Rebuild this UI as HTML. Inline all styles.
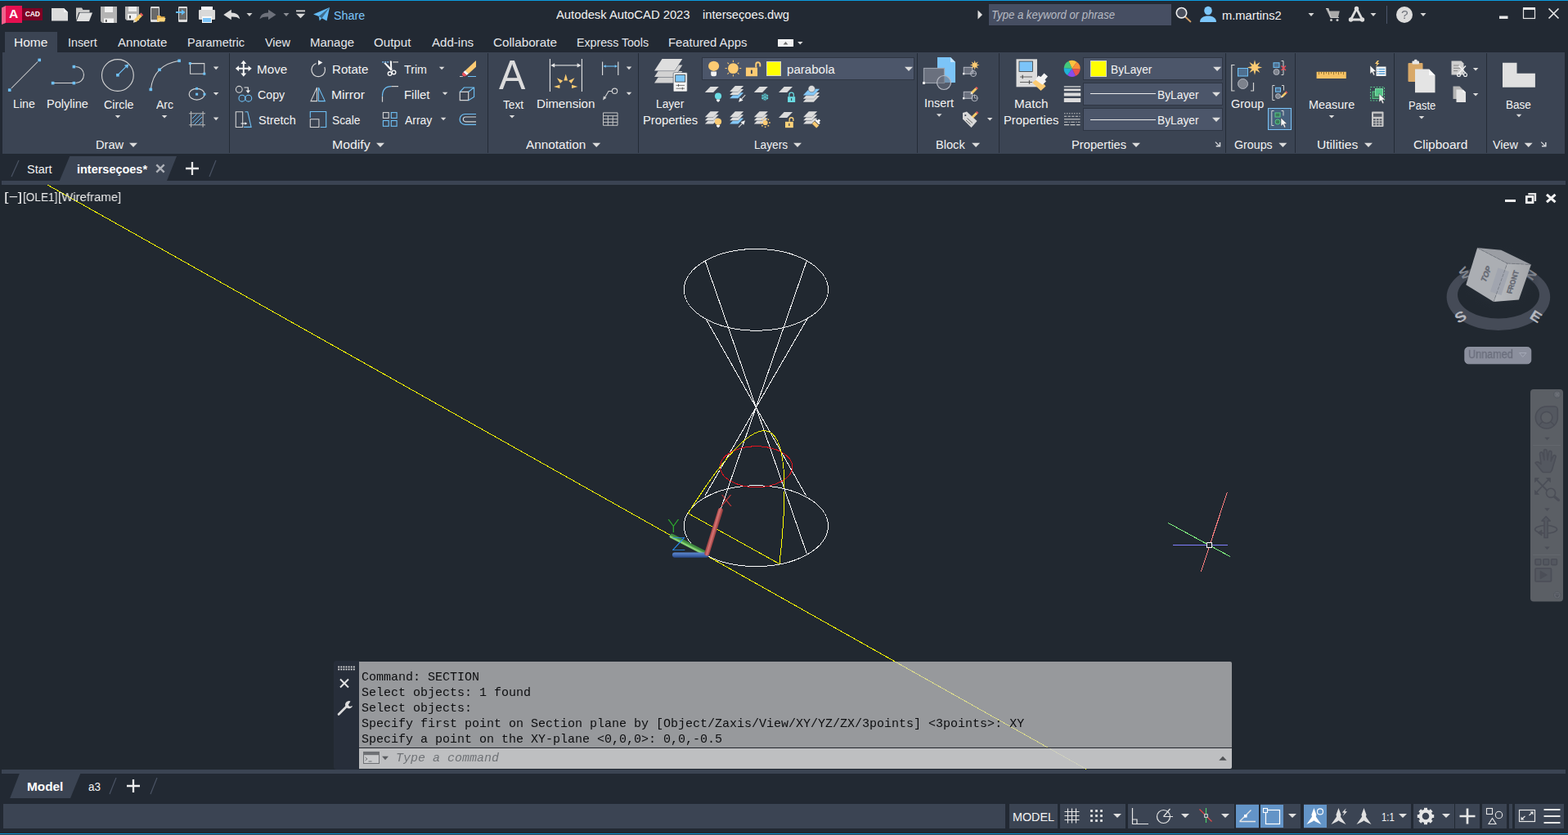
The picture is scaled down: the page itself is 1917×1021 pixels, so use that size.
<!DOCTYPE html>
<html lang="en"><head><meta charset="utf-8"><title>Autodesk AutoCAD 2023 - interseçoes.dwg</title>
<style>
html,body{margin:0;padding:0;background:#222933;overflow:hidden}
#app{position:relative;width:1917px;height:1021px;background:#222933;overflow:hidden;
 font-family:"Liberation Sans",sans-serif;font-size:15.5px;color:#f0f0f0}
.t{position:absolute;white-space:pre;transform-origin:0 50%;}
svg{overflow:visible;display:block}
</style></head>
<body><div id="app">
<div id="titlebar"><div style="position:absolute;left:0px;top:0px;width:1917px;height:1px;background:#0b9ce0;"></div><div class="search" style="position:absolute;left:1209px;top:5px;width:223px;height:26px;background:#464e62;"></div><span class="t" style="left:408.17px;top:7.63px;font-size:15.5px;line-height:22px;transform:scaleX(0.9223);color:#7cc6fa;">Share</span><span class="t" style="left:679.8px;top:6.63px;font-size:15.5px;line-height:22px;transform:scaleX(0.9538);color:#f2f2f2;">Autodesk AutoCAD 2023</span><span class="t" style="left:859.38px;top:6.63px;font-size:15.5px;line-height:22px;transform:scaleX(0.9459);color:#f2f2f2;">interseçoes.dwg</span><span class="t" style="left:1212.15px;top:7.98px;font-size:14.5px;line-height:20px;transform:scaleX(0.9068);color:#b6bac2;font-style:italic;">Type a keyword or phrase</span><span class="t" style="left:1494.48px;top:7.63px;font-size:15.5px;line-height:22px;transform:scaleX(0.9495);color:#f2f2f2;">m.martins2</span><div style="position:absolute;left:1695px;top:7px;width:1px;height:22px;background:#4b556a;"></div><svg style="position:absolute;left:0px;top:0px;" width="1917" height="36" viewBox="0 0 1917 36"><path d="M2 9.5L7 7V28L2 30z" fill="#f0628c"/><rect x="7" y="7" width="20" height="21" fill="#e51050"/><rect x="27" y="10" width="25" height="15" fill="#7d0024"/><path d="M63 10h15l5 5v10.5H63z" fill="#dcdcdc"/><path d="M78 10v5h5z" fill="#f4f4f4"/><path d="M93 9.5h7l1.5 2.5h8v3h-13l-3.5 10z" fill="#c9c9c9"/><path d="M97.5 15.5H113l-4 10.5H93.5z" fill="#e0e0e0"/><path d="M123 8h20v20h-18l-2-2z" fill="#b4b4b4"/><rect x="128" y="8" width="10" height="7" fill="#f0f0f0"/><rect x="127" y="22.5" width="12" height="5.5" fill="#f4f4f4"/><rect x="129" y="24" width="1.6" height="3" fill="#444"/><path d="M153 8h17v17h-15l-2-2z" fill="#b4b4b4"/><rect x="157" y="8" width="10" height="6" fill="#ececec"/><rect x="156" y="17" width="11" height="7" fill="#f0f0f0"/><rect x="158" y="19" width="2" height="3.5" fill="#555"/><path d="M163 27.5l1-3.5 7-7 2.8 2.8-7 7z" fill="#f3c969"/><path d="M171 17l1.4-1.4 2.8 2.8-1.4 1.4z" fill="#f05a5a"/><path d="M163 27.5l1-3.5 2.6 2.6z" fill="#d8d8d8"/><rect x="184" y="8" width="11" height="19" rx="1.2" fill="#dcdcdc"/><rect x="185" y="10" width="9" height="14" fill="#6a6a6a"/><path d="M192 19h4l1 1.2h4.5V26H192z" fill="#e8b34d"/><path d="M193.5 22h9l-1.5 4.5H192z" fill="#fbd57c"/><rect x="218" y="8" width="11" height="19" rx="1.2" fill="#dcdcdc"/><rect x="219" y="10" width="9" height="14" fill="#6a6a6a"/><path d="M215 14h7v-2.5l4.5 3.5-4.5 3.5V16h-7z" fill="#64bdf7"/><rect x="246" y="8" width="14" height="6" fill="#fafafa"/><rect x="243" y="12" width="20" height="12" rx="1" fill="#d9d9d9"/><rect x="247" y="20" width="12" height="8" fill="#fafafa"/><rect x="248" y="22" width="10" height="5" fill="#7cc4f8"/><path d="M273.3 18l9.5-6.3v3.7c6 .2 9.6 2.6 10.4 7.9-2.7-2.5-6-3-10.4-2.8v3.8z" fill="#dcdcdc"/><path d="M301.5 16h7l-3.5 4z" fill="#d0d0d0"/><path d="M337.5 18l-9.5-6.3v3.7c-6 .2-9.6 2.6-10.4 7.9 2.7-2.5 6-3 10.4-2.8v3.8z" fill="#6d717b"/><path d="M346.5 16h7l-3.5 4z" fill="#8d9097"/><rect x="362" y="12.5" width="11" height="1.8" fill="#d8d8d8"/><path d="M362 16.75h11l-5.5 5.5z" fill="#d8d8d8"/><path d="M383 17.5L403 9l-3.5 16.5-6-3.2-2.8 3.2-1-5.5z" fill="#63bbf5"/><path d="M389.7 20L403 9l-9.5 13.3" fill="#222933" opacity=".55"/><path d="M1195.5 12.5v11l5.5-5.5z" fill="#e0e0e0"/><path d="M1449 20.5l6.5 6" stroke="#d3a06a" stroke-width="1.8" stroke-linecap="round"/><circle cx="1444.5" cy="15.7" r="6.2" fill="#4a4f5c" stroke="#f0f0f0" stroke-width="1.6"/><ellipse cx="1477" cy="13" rx="4.8" ry="5.3" fill="#7cc6fa"/><path d="M1467 27c0-5 4-7.5 10-7.5s10 2.5 10 7.5z" fill="#7cc6fa"/><path d="M1599.5 16h7l-3.5 4z" fill="#d8d8d8"/><path d="M1621 10.5h2.8l1 3h13l-1.8 7.5h-10z" fill="#a9a9a9"/><path d="M1621 10.5h2.8l3.2 11h10" stroke="#c9c9c9" stroke-width="1.2" fill="none"/><circle cx="1627.5" cy="24.5" r="1.5" fill="#c9c9c9"/><circle cx="1635" cy="24.5" r="1.5" fill="#c9c9c9"/><path d="M1658.5 10.5L1651.5 24h14z" fill="none" stroke="#dcdcdc" stroke-width="2.8" stroke-linejoin="round"/><circle cx="1658.5" cy="10.5" r="2.7" fill="#dcdcdc"/><circle cx="1651.5" cy="24" r="2.7" fill="#dcdcdc"/><circle cx="1665.5" cy="24" r="2.7" fill="#dcdcdc"/><path d="M1675.5 16h7l-3.5 4z" fill="#d8d8d8"/><circle cx="1717" cy="18" r="10" fill="#dcdcdc"/><path d="M1736.5 16h7l-3.5 4z" fill="#d8d8d8"/><rect x="1833" y="19.5" width="10.5" height="3.5" fill="#e6e6e6"/><rect x="1862.5" y="10.5" width="14" height="12" fill="none" stroke="#e6e6e6" stroke-width="1.2"/><rect x="1862" y="9" width="15" height="3" fill="#e6e6e6"/><path d="M1893.5 10.5l12 12M1905.5 10.5l-12 12" stroke="#e6e6e6" stroke-width="1.7"/></svg><span class="t" style="left:30.68px;top:11.32px;font-size:8.6px;line-height:12px;letter-spacing:-0.176px;color:#fff;font-weight:bold;">CAD</span><span class="t" style="left:11.41px;top:6.75px;font-size:14px;line-height:20px;transform:scaleX(1.1108);color:#fff;font-weight:bold;">A</span><span class="t" style="left:1712.92px;top:7.13px;font-size:15.5px;line-height:22px;color:#70747c;will-change:transform;">?</span></div>
<div id="ribbon"><div class="tab-active" style="position:absolute;left:6px;top:39px;width:64px;height:26px;background:#3b4453;"></div><span class="t" style="left:17.04px;top:40.63px;font-size:15.5px;line-height:22px;color:#f2f2f2;">Home</span><span class="t" style="left:83.05px;top:40.63px;font-size:15.5px;line-height:22px;transform:scaleX(0.9199);color:#e4e6ea;">Insert</span><span class="t" style="left:144px;top:40.63px;font-size:15.5px;line-height:22px;transform:scaleX(0.972);color:#e4e6ea;">Annotate</span><span class="t" style="left:229.22px;top:40.63px;font-size:15.5px;line-height:22px;transform:scaleX(0.9341);color:#e4e6ea;">Parametric</span><span class="t" style="left:323.71px;top:40.63px;font-size:15.5px;line-height:22px;transform:scaleX(0.9299);color:#e4e6ea;">View</span><span class="t" style="left:378.88px;top:40.63px;font-size:15.5px;line-height:22px;transform:scaleX(0.9657);color:#e4e6ea;">Manage</span><span class="t" style="left:457.14px;top:40.63px;font-size:15.5px;line-height:22px;transform:scaleX(0.9755);color:#e4e6ea;">Output</span><span class="t" style="left:528.3px;top:40.63px;font-size:15.5px;line-height:22px;transform:scaleX(0.9728);color:#e4e6ea;">Add-ins</span><span class="t" style="left:603.34px;top:40.63px;font-size:15.5px;line-height:22px;transform:scaleX(0.9821);color:#e4e6ea;">Collaborate</span><span class="t" style="left:705.15px;top:40.63px;font-size:15.5px;line-height:22px;transform:scaleX(0.9147);color:#e4e6ea;">Express Tools</span><span class="t" style="left:817px;top:40.63px;font-size:15.5px;line-height:22px;transform:scaleX(0.9556);color:#e4e6ea;">Featured Apps</span><div style="position:absolute;left:951px;top:48px;width:19px;height:9px;background:#f2f2f2;box-shadow:inset 0 0 0 1px #fff;"></div><div class="ribbon" style="position:absolute;left:3px;top:64px;width:1910px;height:124px;background:#3b4453;"></div><div style="position:absolute;left:280px;top:65px;width:1px;height:122px;background:#242b36;"></div><div style="position:absolute;left:596px;top:65px;width:1px;height:122px;background:#242b36;"></div><div style="position:absolute;left:780px;top:65px;width:1px;height:122px;background:#242b36;"></div><div style="position:absolute;left:1121px;top:65px;width:1px;height:122px;background:#242b36;"></div><div style="position:absolute;left:1221px;top:65px;width:1px;height:122px;background:#242b36;"></div><div style="position:absolute;left:1498px;top:65px;width:1px;height:122px;background:#242b36;"></div><div style="position:absolute;left:1583px;top:65px;width:1px;height:122px;background:#242b36;"></div><div style="position:absolute;left:1704px;top:65px;width:1px;height:122px;background:#242b36;"></div><div style="position:absolute;left:1817px;top:65px;width:1px;height:122px;background:#242b36;"></div><div style="position:absolute;left:858px;top:70px;width:260px;height:28px;background:#4c566a;box-shadow:inset 0 0 0 1px #2e3543;"></div><div style="position:absolute;left:1324px;top:70px;width:171px;height:28px;background:#4c566a;box-shadow:inset 0 0 0 1px #2e3543;"></div><div style="position:absolute;left:1324px;top:101px;width:171px;height:28px;background:#4c566a;box-shadow:inset 0 0 0 1px #2e3543;"></div><div style="position:absolute;left:1324px;top:132px;width:171px;height:28px;background:#4c566a;box-shadow:inset 0 0 0 1px #2e3543;"></div><div style="position:absolute;left:937px;top:75px;width:18px;height:18px;background:#ffff00;box-shadow:inset 0 0 0 1px #d9d9c8;"></div><div style="position:absolute;left:1333px;top:74px;width:20px;height:20px;background:#ffff00;box-shadow:inset 0 0 0 1px #d9d9c8;"></div><div style="position:absolute;left:1333px;top:114px;width:80px;height:1px;background:#ececec;"></div><div style="position:absolute;left:1333px;top:146px;width:80px;height:1px;background:#ececec;"></div><div style="position:absolute;left:1550px;top:132px;width:29px;height:27px;background:#46607d;box-shadow:inset 0 0 0 1px #7cc4f8;"></div><span class="t" style="left:16.35px;top:115.63px;font-size:15.5px;line-height:22px;transform:scaleX(0.9155);color:#f2f2f2;">Line</span><span class="t" style="left:57.42px;top:115.63px;font-size:15.5px;line-height:22px;transform:scaleX(0.9386);color:#f2f2f2;">Polyline</span><span class="t" style="left:126.79px;top:116.63px;font-size:15.5px;line-height:22px;transform:scaleX(0.9222);color:#f2f2f2;">Circle</span><span class="t" style="left:191.1px;top:116.63px;font-size:15.5px;line-height:22px;transform:scaleX(0.9054);color:#f2f2f2;">Arc</span><span class="t" style="left:116.61px;top:165.63px;font-size:15.5px;line-height:22px;transform:scaleX(0.9436);color:#f2f2f2;">Draw</span><span class="t" style="left:314.16px;top:73.63px;font-size:15.5px;line-height:22px;transform:scaleX(0.9822);color:#f2f2f2;">Move</span><span class="t" style="left:315.29px;top:104.63px;font-size:15.5px;line-height:22px;transform:scaleX(0.9166);color:#f2f2f2;">Copy</span><span class="t" style="left:315.77px;top:135.63px;font-size:15.5px;line-height:22px;transform:scaleX(0.9332);color:#f2f2f2;">Stretch</span><span class="t" style="left:405.97px;top:73.63px;font-size:15.5px;line-height:22px;transform:scaleX(0.9727);color:#f2f2f2;">Rotate</span><span class="t" style="left:405.02px;top:104.63px;font-size:15.5px;line-height:22px;transform:scaleX(1.0143);color:#f2f2f2;">Mirror</span><span class="t" style="left:405.7px;top:135.63px;font-size:15.5px;line-height:22px;transform:scaleX(0.8878);color:#f2f2f2;">Scale</span><span class="t" style="left:494.23px;top:73.63px;font-size:15.5px;line-height:22px;transform:scaleX(0.9191);color:#f2f2f2;">Trim</span><span class="t" style="left:494.09px;top:104.63px;font-size:15.5px;line-height:22px;transform:scaleX(0.959);color:#f2f2f2;">Fillet</span><span class="t" style="left:494.5px;top:135.63px;font-size:15.5px;line-height:22px;transform:scaleX(0.8971);color:#f2f2f2;">Array</span><span class="t" style="left:405.91px;top:165.63px;font-size:15.5px;line-height:22px;transform:scaleX(1.021);color:#f2f2f2;">Modify</span><span class="t" style="left:614.74px;top:116.63px;font-size:15.5px;line-height:22px;transform:scaleX(0.8792);color:#f2f2f2;">Text</span><span class="t" style="left:656.17px;top:115.63px;font-size:15.5px;line-height:22px;transform:scaleX(0.9745);color:#f2f2f2;">Dimension</span><span class="t" style="left:643.2px;top:165.63px;font-size:15.5px;line-height:22px;transform:scaleX(0.9885);color:#f2f2f2;">Annotation</span><span class="t" style="left:802.39px;top:115.63px;font-size:15.5px;line-height:22px;transform:scaleX(0.8848);color:#f2f2f2;">Layer</span><span class="t" style="left:786.1px;top:135.63px;font-size:15.5px;line-height:22px;transform:scaleX(0.951);color:#f2f2f2;">Properties</span><span class="t" style="left:961.56px;top:73.63px;font-size:15.5px;line-height:22px;transform:scaleX(0.9733);color:#f2f2f2;">parabola</span><span class="t" style="left:922.29px;top:165.63px;font-size:15.5px;line-height:22px;transform:scaleX(0.8826);color:#f2f2f2;">Layers</span><span class="t" style="left:1129.84px;top:114.63px;font-size:15.5px;line-height:22px;transform:scaleX(0.928);color:#f2f2f2;">Insert</span><span class="t" style="left:1144.31px;top:165.63px;font-size:15.5px;line-height:22px;transform:scaleX(0.9421);color:#f2f2f2;">Block</span><span class="t" style="left:1240.16px;top:115.63px;font-size:15.5px;line-height:22px;transform:scaleX(0.9848);color:#f2f2f2;">Match</span><span class="t" style="left:1227.1px;top:135.63px;font-size:15.5px;line-height:22px;transform:scaleX(0.9524);color:#f2f2f2;">Properties</span><span class="t" style="left:1358.38px;top:73.63px;font-size:15.5px;line-height:22px;transform:scaleX(0.8861);color:#f2f2f2;">ByLayer</span><span class="t" style="left:1415.38px;top:104.63px;font-size:15.5px;line-height:22px;transform:scaleX(0.8897);color:#f2f2f2;">ByLayer</span><span class="t" style="left:1415.38px;top:135.63px;font-size:15.5px;line-height:22px;transform:scaleX(0.8897);color:#f2f2f2;">ByLayer</span><span class="t" style="left:1310.3px;top:165.63px;font-size:15.5px;line-height:22px;transform:scaleX(0.9495);color:#f2f2f2;">Properties</span><span class="t" style="left:1504.68px;top:115.63px;font-size:15.5px;line-height:22px;transform:scaleX(0.9341);color:#f2f2f2;">Group</span><span class="t" style="left:1509.39px;top:165.63px;font-size:15.5px;line-height:22px;transform:scaleX(0.9194);color:#f2f2f2;">Groups</span><span class="t" style="left:1600.13px;top:116.63px;font-size:15.5px;line-height:22px;transform:scaleX(0.9313);color:#f2f2f2;">Measure</span><span class="t" style="left:1609.83px;top:165.63px;font-size:15.5px;line-height:22px;transform:scaleX(1.0074);color:#f2f2f2;">Utilities</span><span class="t" style="left:1721.74px;top:117.63px;font-size:15.5px;line-height:22px;transform:scaleX(0.8385);color:#f2f2f2;">Paste</span><span class="t" style="left:1728.03px;top:165.63px;font-size:15.5px;line-height:22px;color:#f2f2f2;">Clipboard</span><span class="t" style="left:1841.4px;top:116.63px;font-size:15.5px;line-height:22px;transform:scaleX(0.8737);color:#f2f2f2;">Base</span><span class="t" style="left:1824.71px;top:165.63px;font-size:15.5px;line-height:22px;transform:scaleX(0.9239);color:#f2f2f2;">View</span><span class="t" style="left:610.2px;top:57.27px;font-size:50px;line-height:70px;transform:scaleX(0.969);color:#dcdcdc;">A</span><svg style="position:absolute;left:0px;top:36px;" width="1917" height="156" viewBox="0 36 1917 156"><path d="M957.6 54.5l2.9-3.6 2.9 3.6z" fill="#6a6a6a"/><path d="M975.05 51h6.5l-3.25 3.6z" fill="#dcdcdc"/><path d="M158 174.70000000000002h10l-5 5.2z" fill="#dcdcdc"/><path d="M460 174.70000000000002h10l-5 5.2z" fill="#dcdcdc"/><path d="M724.2 174.70000000000002h10l-5 5.2z" fill="#dcdcdc"/><path d="M970 174.70000000000002h10l-5 5.2z" fill="#dcdcdc"/><path d="M1188.1 174.70000000000002h10l-5 5.2z" fill="#dcdcdc"/><path d="M1384 174.70000000000002h10l-5 5.2z" fill="#dcdcdc"/><path d="M1563.4 174.70000000000002h10l-5 5.2z" fill="#dcdcdc"/><path d="M1668 174.70000000000002h10l-5 5.2z" fill="#dcdcdc"/><path d="M1863.7 174.70000000000002h10l-5 5.2z" fill="#dcdcdc"/><path d="M1485.9 173.6l5 5" stroke="#d8dade" stroke-width="1.3" fill="none"/><path d="M1486.7 178.7h4.8v-4.7" stroke="#d8dade" stroke-width="1.5" fill="none"/><path d="M1884.2 173.6l5 5" stroke="#d8dade" stroke-width="1.3" fill="none"/><path d="M1885 178.7h4.8v-4.7" stroke="#d8dade" stroke-width="1.5" fill="none"/><path d="M140.75 140.89999999999998h6.5l-3.25 3.6z" fill="#dcdcdc"/><path d="M197.85 140.89999999999998h6.5l-3.25 3.6z" fill="#dcdcdc"/><path d="M622.75 140.89999999999998h6.5l-3.25 3.6z" fill="#dcdcdc"/><path d="M1144.95 139.2h6.5l-3.25 3.6z" fill="#dcdcdc"/><path d="M1624.75 140.89999999999998h6.5l-3.25 3.6z" fill="#dcdcdc"/><path d="M1734.75 142h6.5l-3.25 3.6z" fill="#dcdcdc"/><path d="M1853.75 139.7h6.5l-3.25 3.6z" fill="#dcdcdc"/><path d="M260.85 81.60000000000001h6.5l-3.25 3.6z" fill="#dcdcdc"/><path d="M260.85 113h6.5l-3.25 3.6z" fill="#dcdcdc"/><path d="M260.85 143.6h6.5l-3.25 3.6z" fill="#dcdcdc"/><path d="M536.85 81.7h6.5l-3.25 3.6z" fill="#dcdcdc"/><path d="M540.85 112.7h6.5l-3.25 3.6z" fill="#dcdcdc"/><path d="M538.85 143.7h6.5l-3.25 3.6z" fill="#dcdcdc"/><path d="M765.75 81.60000000000001h6.5l-3.25 3.6z" fill="#dcdcdc"/><path d="M765.75 112.7h6.5l-3.25 3.6z" fill="#dcdcdc"/><path d="M1206.95 143.89999999999998h6.5l-3.25 3.6z" fill="#dcdcdc"/><path d="M1800.85 83h6.5l-3.25 3.6z" fill="#dcdcdc"/><path d="M1800.85 113.9h6.5l-3.25 3.6z" fill="#dcdcdc"/><path d="M1483.1 81.7h10l-5 5.2z" fill="#dcdcdc"/><path d="M1482 112.80000000000001h10l-5 5.2z" fill="#dcdcdc"/><path d="M1482 143.8h10l-5 5.2z" fill="#dcdcdc"/><path d="M1106 81.7h10l-5 5.2z" fill="#dcdcdc"/><path d="M13.8 108L46.1 75.5" stroke="#d4d4d4" stroke-width="1.05" fill="none" /><rect x="9.9" y="108.3" width="3.6" height="3.6" fill="#6fc1f6"/><rect x="46.4" y="71.6" width="3.6" height="3.6" fill="#6fc1f6"/><path d="M64.6 101.5H90.4M92.5 81.5A10 10 0 0 1 92.5 101.5" stroke="#d4d4d4" stroke-width="1.05" fill="none" /><rect x="62.8" y="99.8" width="3.6" height="3.6" fill="#6fc1f6"/><rect x="88.6" y="99.8" width="3.6" height="3.6" fill="#6fc1f6"/><rect x="88.6" y="79.8" width="3.6" height="3.6" fill="#6fc1f6"/><circle cx="143.9" cy="92" r="19.4" fill="none" stroke="#d4d4d4" stroke-width="1.1"/><path d="M144.5 91.2L155 80.7" stroke="#6fc1f6" stroke-width="1.2" fill="none" /><path d="M157.3 78.4l-1.3 5.4-4.1-4.1z" fill="#6fc1f6" /><rect x="142.1" y="90" width="3.6" height="3.6" fill="#6fc1f6"/><path d="M184.3 109.4C185.5 99 189 91 195 85.3C201 79.5 209 76 219.1 74.3" stroke="#d4d4d4" stroke-width="1.05" fill="none" /><rect x="182.5" y="107.6" width="3.6" height="3.6" fill="#6fc1f6"/><rect x="193.2" y="83.5" width="3.6" height="3.6" fill="#6fc1f6"/><rect x="217.3" y="72.5" width="3.6" height="3.6" fill="#6fc1f6"/><path d="M232.6 77.6H249.8V90.2H232.6z" stroke="#d4d4d4" stroke-width="1.05" fill="none" /><rect x="230.8" y="76" width="3" height="3" fill="#6fc1f6"/><rect x="248.3" y="88.7" width="3" height="3" fill="#6fc1f6"/><ellipse cx="240.6" cy="115.2" rx="9.4" ry="6.9" fill="none" stroke="#d4d4d4" stroke-width="1.2"/><rect x="239.1" y="106.8" width="3" height="3" fill="#6fc1f6"/><rect x="239.1" y="113.7" width="3" height="3" fill="#6fc1f6"/><rect x="248.5" y="113.7" width="3" height="3" fill="#6fc1f6"/><path d="M235 145l5.5-5.5M235 150.5l11-11M237.5 152.5l9.5-9.5M243 152.5l4-4" stroke="#6fc1f6" stroke-width="1" fill="none" /><path d="M231.2 138.7H251M231.2 152.8H251M233.6 136V155.6M248.1 136V155.6" stroke="#b8b8b8" stroke-width="1.1" fill="none" /><g transform="translate(297.8 83.8) scale(1.08) translate(-297.9 -84.2)"><path d="M297.9 75l3.2 3.9h-2.3v4.4h4.4v-2.3l3.9 3.2-3.9 3.2v-2.3h-4.4v4.4h2.3l-3.2 3.9-3.2-3.9h2.3v-4.4h-4.4v2.3l-3.9-3.2 3.9-3.2v2.3h4.4v-4.4h-2.3z" fill="#f4f4f4" /></g><circle cx="292.3" cy="109.3" r="3.9" fill="none" stroke="#d4d4d4" stroke-width="1.1"/><circle cx="295.9" cy="120.2" r="3.9" fill="none" stroke="#6fc1f6" stroke-width="1.1"/><circle cx="303.8" cy="120.2" r="3.9" fill="none" stroke="#6fc1f6" stroke-width="1.1"/><path d="M298.5 107h4.8v4" stroke="#e8e8e8" stroke-width="1.1" fill="none" /><path d="M300.6 110.5h5.4l-2.7 3.4z" fill="#f4f4f4" /><path d="M288.3 136.7h8.4v18.7h-8.4z" stroke="#d4d4d4" stroke-width="1.05" fill="none" /><path d="M299.5 136.7h3.3l4.3 18.7h-9" stroke="#6fc1f6" stroke-width="1.1" fill="none" /><path d="M294.5 151h6" stroke="#f0f0f0" stroke-width="1.1" fill="none" /><path d="M299.5 149.2l2.8 1.8-2.8 1.8z" fill="#f0f0f0" /><path d="M386.5 77.5A8.3 8.3 0 1 0 396.8 82" stroke="#d8d8d8" stroke-width="1.2" fill="none" /><path d="M389 73.6l5.4 2.9-5.4 3.3z" fill="#f4f4f4" /><path d="M387.6 107v16.6h-7.6z" stroke="#d4d4d4" stroke-width="1.05" fill="none" /><path d="M389.5 107v16.6h7.8z" stroke="#6fc1f6" stroke-width="1.05" fill="none" /><path d="M379.3 145.8h10.6v9.7h-10.6z" stroke="#d4d4d4" stroke-width="1.05" fill="none" /><path d="M379.3 144v-7.5h19.4v19h-7" stroke="#6fc1f6" stroke-width="1.1" fill="none" /><path d="M467.2 75.9h8.6" stroke="#6fa8d8" stroke-width="1.6" fill="none" stroke-dasharray="2 1"/><path d="M480.3 75.9h6.7" stroke="#b0b0b0" stroke-width="1.6" fill="none" /><path d="M469.3 77.3l1.9-.8 8.4 8.3-1.6 2z" fill="#f6f6f6" /><path d="M476.8 74.2l2.1.5.4 11-1.9 .8z" fill="#f6f6f6" /><circle cx="476.6" cy="90.1" r="2.3" fill="none" stroke="#f6f6f6" stroke-width="1.4"/><circle cx="481.5" cy="88.4" r="2.3" fill="none" stroke="#f6f6f6" stroke-width="1.4"/><path d="M467.5 124.7v-7" stroke="#d4d4d4" stroke-width="1.2" fill="none" /><path d="M467.5 117.7C467.5 110 471 105.6 478.5 105.6" stroke="#6fc1f6" stroke-width="1.2" fill="none" /><path d="M478.5 105.6h8.5" stroke="#d4d4d4" stroke-width="1.2" fill="none" /><rect x="468.4" y="137.6" width="6.8" height="6.8" fill="none" stroke="#d4d4d4" stroke-width="1.1"/><rect x="478.3" y="137.6" width="6.8" height="6.8" fill="none" stroke="#6fc1f6" stroke-width="1.1"/><rect x="468.4" y="147.5" width="6.8" height="6.8" fill="none" stroke="#6fc1f6" stroke-width="1.1"/><rect x="478.3" y="147.5" width="6.8" height="6.8" fill="none" stroke="#6fc1f6" stroke-width="1.1"/><path d="M568.5 86.5l13.5-12.5v7.8l-9.3 8.4z" fill="#fccb73" /><path d="M566.3 88.2l2.3-2 4.2 3.9-2.2 2z" fill="#f8f8f8" /><path d="M566.3 88.2l4.3 3.9-1.2 1-2.3 .3-1.8-1.3-.3-2.2z" fill="#f0505a" /><path d="M562 93.5h3.8" stroke="#d0d0d0" stroke-width="1" fill="none" /><path d="M572 93.5h10" stroke="#6fc1f6" stroke-width="1" fill="none" /><path d="M562.3 112.3h10.4v10.4h-10.4z" stroke="#d4d4d4" stroke-width="1.2" fill="none" /><path d="M562.3 112.3l5-5.3h12.3v11.4l-7 4.3M572.7 112.3l6.9-5.3" stroke="#6fc1f6" stroke-width="1.1" fill="none" /><path d="M582 139.5h-13.5a6.3 6.3 0 0 0 0 12.8H582" stroke="#6fc1f6" stroke-width="1.2" fill="none" /><path d="M582 143h-12.8a2.9 2.9 0 0 0 0 5.8H582" stroke="#d4d4d4" stroke-width="1.2" fill="none" /><path d="M672.4 72v40M711.4 72v40" stroke="#e4e4e4" stroke-width="1.1" fill="none" /><path d="M677 79.9h30" stroke="#e4e4e4" stroke-width="1.1" fill="none" /><path d="M673.2 79.9l5-2.7v5.4z" fill="#e4e4e4" /><path d="M710.6 79.9l-5-2.7v5.4z" fill="#e4e4e4" /><path d="M691.7 90.6l-2.4 8h4.8z" fill="#fccb73" /><path d="M680.9 95.2l4 6.8 3.3-3.2z" fill="#fccb73" /><path d="M702.5 95.2l-4 6.8-3.3-3.2z" fill="#fccb73" /><path d="M677 105.9l7.4 2.1v-4.3z" fill="#fccb73" /><path d="M706.4 105.9l-7.4 2.1v-4.3z" fill="#fccb73" /><path d="M736.6 75.4v16.6M755.8 75.4v16.6" stroke="#e4e4e4" stroke-width="1.1" fill="none" /><path d="M740 81h12.5" stroke="#6fc1f6" stroke-width="1.1" fill="none" /><path d="M737.4 81l3.3-1.8v3.6z" fill="#6fc1f6" /><path d="M755 81l-3.3-1.8v3.6z" fill="#6fc1f6" /><circle cx="751.5" cy="111.3" r="3.2" fill="none" stroke="#d4d4d4" stroke-width="1.1"/><path d="M748.3 111.5h-4.3l-5 8.5" stroke="#d4d4d4" stroke-width="1.1" fill="none" /><path d="M737 122.5l1-5 3.4 2.2z" fill="#d4d4d4" /><path d="M737.5 137.9h17.5v15.4h-17.5zM737.5 141.7h17.5M737.5 145.6h17.5M737.5 149.4h17.5M743.3 141.7v11.6M749.2 141.7v11.6" stroke="#c4c4c4" stroke-width="1" fill="none" /><path d="M809.5 87.1h24.8l-9.5 14.5h-24.8z" fill="#d2d2d2" stroke="#3b4453" stroke-width=".8" paint-order="stroke"/><path d="M809.5 79.6h24.8l-9.5 14.5h-24.8z" fill="#d2d2d2" stroke="#3b4453" stroke-width=".8" paint-order="stroke"/><path d="M809.5 72.1h24.8l-9.5 14.5h-24.8z" fill="#dedede" stroke="#3b4453" stroke-width=".8" paint-order="stroke"/><rect x="823.2" y="88.8" width="17" height="23.2" rx="1" fill="#f4f4f4" stroke="#3b4453" stroke-width=".6"/><rect x="825.7" y="91.6" width="12" height="8.5" fill="#7cc6f8" stroke="#3a3a3a" stroke-width=".8"/><path d="M826.5 104.4h10.5M826.5 108.2h10.5" stroke="#555" stroke-width="0.8" fill="none" /><path d="M829.5 103v2.8M834.3 106.8v2.8" stroke="#555" stroke-width="1" fill="none" /><ellipse cx="872.6" cy="80.8" rx="6.6" ry="6.1" fill="#fccb73"/><path d="M869.2 87.6h6.8v3.4a2.2 2.2 0 0 1-2.2 2.2h-2.4a2.2 2.2 0 0 1-2.2-2.2z" fill="#f4f4f4"/><g transform="translate(896.4 83.6) scale(1)"><circle r="6.4" fill="#fccb73"/><path d="M0 -7.6v-2.3" transform="rotate(0)" stroke="#fccb73" stroke-width="1"/><path d="M0 -7.6v-2.3" transform="rotate(45)" stroke="#fccb73" stroke-width="1"/><path d="M0 -7.6v-2.3" transform="rotate(90)" stroke="#fccb73" stroke-width="1"/><path d="M0 -7.6v-2.3" transform="rotate(135)" stroke="#fccb73" stroke-width="1"/><path d="M0 -7.6v-2.3" transform="rotate(180)" stroke="#fccb73" stroke-width="1"/><path d="M0 -7.6v-2.3" transform="rotate(225)" stroke="#fccb73" stroke-width="1"/><path d="M0 -7.6v-2.3" transform="rotate(270)" stroke="#fccb73" stroke-width="1"/><path d="M0 -7.6v-2.3" transform="rotate(315)" stroke="#fccb73" stroke-width="1"/></g><g transform="translate(911.9 82.6) scale(1.01)"><path d="M0 0h14v10.5h-14z" fill="#fccb73"/><path d="M12.200000000000001 0v-3.8a2.5 2.5 0 0 1 5 0v2.6" fill="none" stroke="#fccb73" stroke-width="1.9"/><rect x="6" y="3" width="1.8" height="4.5" fill="#3b4453"/></g><path d="M868.5 105.9h10.3l-6.7 7h-10.3z" fill="#dcdcdc"/><circle cx="878" cy="117.6" r="4.1" fill="#6adbe2"/><path d="M875.9 121.5h4.2v1.5l-2.1 2-2.1-2z" fill="#f6f6f6"/><path d="M898.8 113.2h10.3l-6.7 7h-10.3z" fill="#84c8f7" stroke="#3b4453" stroke-width=".7" paint-order="stroke"/><path d="M898.8 109.1h10.3l-6.7 7h-10.3z" fill="#dcdcdc" stroke="#3b4453" stroke-width=".7" paint-order="stroke"/><path d="M898.8 105h10.3l-6.7 7h-10.3z" fill="#dcdcdc" stroke="#3b4453" stroke-width=".7" paint-order="stroke"/><path d="M911.2 116.2L906.6 121" stroke="#cfcfcf" stroke-width="1.1" fill="none" /><path d="M903 124.8L904.7 119.2L908.5 122.8z" fill="#f2f2f2" /><path d="M928.5 105.9h10.3l-6.7 7h-10.3z" fill="#dcdcdc"/><g transform="translate(935.2 118.6)"><path d="M0 -4.6V4.6M-1.6 -3.6L0 -2.2 1.6 -3.6M-1.6 3.6L0 2.2 1.6 3.6" transform="rotate(0)" stroke="#5fd0d8" stroke-width=".9" fill="none"/><path d="M0 -4.6V4.6M-1.6 -3.6L0 -2.2 1.6 -3.6M-1.6 3.6L0 2.2 1.6 3.6" transform="rotate(60)" stroke="#5fd0d8" stroke-width=".9" fill="none"/><path d="M0 -4.6V4.6M-1.6 -3.6L0 -2.2 1.6 -3.6M-1.6 3.6L0 2.2 1.6 3.6" transform="rotate(120)" stroke="#5fd0d8" stroke-width=".9" fill="none"/></g><path d="M958.7 105.9h10.3l-6.7 7h-10.3z" fill="#dcdcdc"/><g transform="translate(967.6 118.2) scale(0.65)"><path d="M-7 0h14v10.5h-14z" fill="#6adbe2"/><path d="M-4.2 0v-3.6a4.2 4.2 0 0 1 8.4 0v3.6" fill="none" stroke="#6adbe2" stroke-width="1.8"/><rect x="-.9" y="3" width="1.8" height="4.5" fill="#3b4453"/></g><path d="M989.1 117h13l-7.3 7.8h-13z" fill="#dcdcdc" stroke="#3b4453" stroke-width=".7" paint-order="stroke"/><path d="M989.1 112.9h13l-7.3 7.8h-13z" fill="#dcdcdc" stroke="#3b4453" stroke-width=".7" paint-order="stroke"/><path d="M989.1 108.8h13l-7.3 7.8h-13z" fill="#84c8f7" stroke="#3b4453" stroke-width=".7" paint-order="stroke"/><circle cx="992.3" cy="108.6" r="4.2" fill="#dcdcdc" stroke="#3b4453" stroke-width=".5"/><path d="M868.5 144.4h10.3l-6.7 7h-10.3z" fill="#dcdcdc" stroke="#3b4453" stroke-width=".7" paint-order="stroke"/><path d="M868.5 140.3h10.3l-6.7 7h-10.3z" fill="#dcdcdc" stroke="#3b4453" stroke-width=".7" paint-order="stroke"/><path d="M868.5 136.2h10.3l-6.7 7h-10.3z" fill="#dcdcdc" stroke="#3b4453" stroke-width=".7" paint-order="stroke"/><circle cx="878" cy="148.8" r="4.1" fill="#fccb73"/><path d="M875.9 152.70000000000002h4.2v1.5l-2.1 2-2.1-2z" fill="#f6f6f6"/><path d="M898.8 144.4h10.3l-6.7 7h-10.3z" fill="#84c8f7" stroke="#3b4453" stroke-width=".7" paint-order="stroke"/><path d="M898.8 140.3h10.3l-6.7 7h-10.3z" fill="#dcdcdc" stroke="#3b4453" stroke-width=".7" paint-order="stroke"/><path d="M898.8 136.2h10.3l-6.7 7h-10.3z" fill="#dcdcdc" stroke="#3b4453" stroke-width=".7" paint-order="stroke"/><path d="M903 155.6L907.4 151" stroke="#cfcfcf" stroke-width="1.1" fill="none" /><path d="M911 147.2L909.3 152.8L905.5 149.2z" fill="#f2f2f2" /><path d="M928.5 144.4h10.3l-6.7 7h-10.3z" fill="#dcdcdc" stroke="#3b4453" stroke-width=".7" paint-order="stroke"/><path d="M928.5 140.3h10.3l-6.7 7h-10.3z" fill="#dcdcdc" stroke="#3b4453" stroke-width=".7" paint-order="stroke"/><path d="M928.5 136.2h10.3l-6.7 7h-10.3z" fill="#dcdcdc" stroke="#3b4453" stroke-width=".7" paint-order="stroke"/><circle cx="935.6" cy="150" r="3.1" fill="#fccb73"/><rect x="940.1" y="149.2" width="1.6" height="1.6" fill="#fccb73"/><rect x="938.55" y="152.95" width="1.6" height="1.6" fill="#fccb73"/><rect x="934.8" y="154.5" width="1.6" height="1.6" fill="#fccb73"/><rect x="931.05" y="152.95" width="1.6" height="1.6" fill="#fccb73"/><rect x="929.5" y="149.2" width="1.6" height="1.6" fill="#fccb73"/><rect x="931.05" y="145.45" width="1.6" height="1.6" fill="#fccb73"/><rect x="934.8" y="143.9" width="1.6" height="1.6" fill="#fccb73"/><rect x="938.55" y="145.45" width="1.6" height="1.6" fill="#fccb73"/><path d="M958.7 136.9h10.3l-6.7 7h-10.3z" fill="#dcdcdc"/><g transform="translate(960 148.8) scale(0.7)"><path d="M0 0h14v10.5h-14z" fill="#fcd27a"/><path d="M7.300000000000001 0v-3.8a3.4 3.4 0 0 1 6.8 0v2.6" fill="none" stroke="#fcd27a" stroke-width="1.9"/><rect x="6" y="3" width="1.8" height="4.5" fill="#3b4453"/></g><path d="M988.8 144.4h10.3l-6.7 7h-10.3z" fill="#dcdcdc" stroke="#3b4453" stroke-width=".7" paint-order="stroke"/><path d="M988.8 140.3h10.3l-6.7 7h-10.3z" fill="#dcdcdc" stroke="#3b4453" stroke-width=".7" paint-order="stroke"/><path d="M988.8 136.2h10.3l-6.7 7h-10.3z" fill="#dcdcdc" stroke="#3b4453" stroke-width=".7" paint-order="stroke"/><path d="M992.6 151.2l3.2-3.2 5.6 5.6-3.2 3.2z" fill="#fccb73" stroke="#3b4453" stroke-width=".4"/><path d="M996.3 147.5l1.7-1.7 1.4 1.4 1.8-1.8 2 2-1.8 1.8 1.4 1.4-1.7 1.7z" fill="#f6f6f6" /><path d="M1146 70h16l6 6v25h-22z" fill="#7cc4f8" /><path d="M1162 70v6h6z" fill="#c4e4fb" /><rect x="1129.5" y="83.5" width="25" height="18" fill="#6a707e" stroke="#9aa0ac" stroke-width="1.2"/><circle cx="1154" cy="101" r="8.5" fill="#6a707e" fill-opacity=".55" stroke="#b4b8c2" stroke-width="1.2"/><rect x="1128" y="100" width="3" height="3" fill="#e8e8e8"/><rect x="1178.3" y="82.3" width="10.5" height="8" fill="#6a707e" stroke="#b4b8c2" stroke-width="1"/><circle cx="1190" cy="90" r="3.5" fill="none" stroke="#b4b8c2" stroke-width="1"/><path d="M1190 85.5v4.5h4" stroke="#b4b8c2" stroke-width=".9" fill="none"/><rect x="1177" y="89" width="2.4" height="2.4" fill="#e8e8e8"/><polygon points="1191.7,73.8 1192.7,77.2 1195.8,75.5 1194.1,78.6 1197.5,79.6 1194.1,80.6 1195.8,83.7 1192.7,82 1191.7,85.4 1190.7,82 1187.6,83.7 1189.3,80.6 1185.9,79.6 1189.3,78.6 1187.6,75.5 1190.7,77.2" fill="#fccb73"/><rect x="1178.3" y="112.3" width="10.5" height="8" fill="#6a707e" stroke="#b4b8c2" stroke-width="1"/><circle cx="1191.5" cy="120" r="3.7" fill="none" stroke="#b4b8c2" stroke-width="1"/><path d="M1191.5 115.5v4.5h4" stroke="#b4b8c2" stroke-width=".9" fill="none"/><rect x="1177" y="119" width="2.4" height="2.4" fill="#e8e8e8"/><g transform="translate(1186.5 108.5) scale(0.85)"><path d="M0 8l1-3.5 6-6 2.5 2.5-6 6z" fill="#f3c969"/><path d="M7 -1.5l1.5-1.5 2.5 2.5-1.5 1.5z" fill="#f05a5a"/><path d="M0 8l1-3.5 2.5 2.5z" fill="#e8e8e8"/></g><path d="M1177 138l5-1.5 12.5 11.5-7 8-10.5-10.5z" fill="#d9d9d9" /><circle cx="1180.3" cy="141" r="1.1" fill="#3b4453"/><path d="M1182.5 144.5l6.5 6M1181 147l5.5 5" stroke="#555" stroke-width="0.9" fill="none" /><g transform="translate(1187 138.5) scale(0.85)"><path d="M0 8l1-3.5 6-6 2.5 2.5-6 6z" fill="#f3c969"/><path d="M7 -1.5l1.5-1.5 2.5 2.5-1.5 1.5z" fill="#f05a5a"/><path d="M0 8l1-3.5 2.5 2.5z" fill="#e8e8e8"/></g><rect x="1242.5" y="72.3" width="25.5" height="34" fill="#dcdcdc"/><rect x="1246" y="75" width="16.5" height="12.5" fill="#7cc4f8" stroke="#3a3a3a" stroke-width=".8"/><path d="M1247 94h15M1247 100.5h15" stroke="#555" stroke-width="0.9" fill="none" /><path d="M1250.2 91.8v4.4M1258.5 98.3v4.4" stroke="#555" stroke-width="1.3" fill="none" /><path d="M1262 101l8-6 8.5 10.5-6 5.5z" fill="#fccb73" /><path d="M1266 97.5l3.5-5 3 1.5 4-4.5 4.5 4-3.5 4 1.5 2-4.5 4.2z" fill="#f4f4f4" /><path d="M1310.7 83.9L1306.47 74.84A10 10 0 0 1 1316.44 75.71z" fill="#fbc23e"/><path d="M1310.7 83.9L1316.44 75.71A10 10 0 0 1 1320.66 84.77z" fill="#f98f3a"/><path d="M1310.7 83.9L1320.66 84.77A10 10 0 0 1 1314.93 92.96z" fill="#e8524f"/><path d="M1310.7 83.9L1314.93 92.96A10 10 0 0 1 1304.96 92.09z" fill="#8a4cec"/><path d="M1310.7 83.9L1304.96 92.09A10 10 0 0 1 1300.74 83.03z" fill="#1fb3d6"/><path d="M1310.7 83.9L1300.74 83.03A10 10 0 0 1 1306.47 74.84z" fill="#43c97b"/><rect x="1300.8" y="105.3" width="20.4" height="1.3" fill="#dcdcdc"/><rect x="1300.8" y="108.6" width="20.4" height="2.6" fill="#dcdcdc"/><rect x="1300.8" y="113.5" width="20.4" height="4" fill="#dcdcdc"/><rect x="1300.8" y="120" width="20.4" height="5" fill="#dcdcdc"/><path d="M1301 138.7h19.5" stroke="#c8c8c8" stroke-width="1.1" fill="none" stroke-dasharray="1.5 1.5"/><path d="M1301 142.3h19.5" stroke="#c8c8c8" stroke-width="1.1" fill="none" stroke-dasharray="3.2 1.4"/><path d="M1301 145.8h19.5" stroke="#c8c8c8" stroke-width="1.1" fill="none" /><path d="M1301 149.3h19.5" stroke="#c8c8c8" stroke-width="1.1" fill="none" stroke-dasharray="4.5 1.2 1.5 1.2"/><path d="M1301 152.6h19.5" stroke="#c8c8c8" stroke-width="1.1" fill="none" stroke-dasharray="6 1.5"/><path d="M1509.5 79.5h-3.7v31.5h3.7M1529 111h3.5v-10" stroke="#d4d4d4" stroke-width="1.2" fill="none" /><rect x="1513.5" y="83.5" width="12" height="9.5" fill="#4f6f8f" stroke="#6fc1f6" stroke-width="1"/><circle cx="1519.5" cy="102.5" r="6" fill="#7d828c" stroke="#b4b8c2" stroke-width="1"/><polygon points="1534,73.3 1535.5,79 1540.5,76 1537.5,81 1543.2,82.5 1537.5,84 1540.5,89 1535.5,86 1534,91.7 1532.5,86 1527.5,89 1530.5,84 1524.8,82.5 1530.5,81 1527.5,76 1532.5,79" fill="#fccb73"/><rect x="1557" y="76.8" width="7" height="5.6" fill="#4f6f8f" stroke="#6fc1f6" stroke-width="1"/><circle cx="1560.5" cy="88" r="3.5" fill="#7d828c" stroke="#b4b8c2" stroke-width="1"/><path d="M1566.5 74.5h2.5v17h-2.5" stroke="#d4d4d4" stroke-width="1" fill="none" /><path d="M1566.5 80.5l5.5 5.5M1572 80.5l-5.5 5.5" stroke="#f04a56" stroke-width="1.4" fill="none" /><rect x="1559.5" y="107.3" width="6" height="5" fill="#4f6f8f" stroke="#6fc1f6" stroke-width="1"/><circle cx="1562.5" cy="117.5" r="3" fill="#7d828c" stroke="#b4b8c2" stroke-width="1"/><path d="M1558.5 104.5h-2.7v18h2.7M1567 104.5h2.5v6" stroke="#d4d4d4" stroke-width="1" fill="none" /><g transform="translate(1566 113.5) scale(0.75)"><path d="M0 8l1-3.5 6-6 2.5 2.5-6 6z" fill="#f3c969"/><path d="M7 -1.5l1.5-1.5 2.5 2.5-1.5 1.5z" fill="#f05a5a"/><path d="M0 8l1-3.5 2.5 2.5z" fill="#e8e8e8"/></g><rect x="1559" y="138" width="6" height="5" fill="#3d7a5a" stroke="#56c58a" stroke-width="1"/><circle cx="1562" cy="149" r="3" fill="#3d7a5a" stroke="#56c58a" stroke-width="1"/><path d="M1557.5 135.5h-2.7v18h2.7M1566.5 135.5h2.5v6" stroke="#d4d4d4" stroke-width="1" fill="none" /><path transform="translate(1566 144) scale(0.95)" d="M0 0v11l2.6-2.4 1.8 4.2 1.9-.8-1.8-4.1h3.6z" fill="#f4f4f4" stroke="#30343c" stroke-width=".5"/><rect x="1609.6" y="87.8" width="36.2" height="8.2" fill="#f5c264"/><path d="M1612.5 87.8v3.5M1615.5 87.8v2.3M1618.5 87.8v3.5M1621.5 87.8v2.3M1624.5 87.8v3.5M1627.5 87.8v2.3M1630.5 87.8v3.5M1633.5 87.8v2.3M1636.5 87.8v3.5M1639.5 87.8v2.3M1642.5 87.8v3.5" stroke="#8f6c2a" stroke-width="0.9" fill="none" /><rect x="1682.5" y="81.5" width="12" height="11.5" fill="#f4f4f4"/><path d="M1685.7 84.5h7.5M1685.7 87.3h7.5M1685.7 90.1h7.5" stroke="#3d8fd0" stroke-width="1.2" fill="none" /><path d="M1683.8 84.5h1M1683.8 87.3h1M1683.8 90.1h1" stroke="#3d8fd0" stroke-width="1.2" fill="none" /><path d="M1684 74l-3 4h2.5l-1.5 3.5 4.5-4.5h-2.5l2-3z" fill="#fccb73" /><path transform="translate(1675 80) scale(0.95)" d="M0 0v11l2.6-2.4 1.8 4.2 1.9-.8-1.8-4.1h3.6z" fill="#f4f4f4" stroke="#30343c" stroke-width=".5"/><rect x="1675.5" y="106.5" width="17" height="16.5" fill="none" stroke="#56c58a" stroke-width="1" stroke-dasharray="2 1.5"/><rect x="1678" y="112" width="9" height="8.5" fill="#3d7a5a" stroke="#56c58a" stroke-width="1"/><rect x="1681.5" y="108.5" width="9" height="8.5" fill="#56c58a" stroke="#7fe0a8" stroke-width="1"/><path transform="translate(1686 114.5) scale(0.95)" d="M0 0v11l2.6-2.4 1.8 4.2 1.9-.8-1.8-4.1h3.6z" fill="#f4f4f4" stroke="#30343c" stroke-width=".5"/><rect x="1677" y="136.5" width="14.5" height="18.5" rx="1" fill="#c9c9c9"/><rect x="1679" y="138.8" width="10.5" height="4" fill="#555b66"/><rect x="1679" y="145.2" width="2.8" height="2" fill="#555b66"/><rect x="1682.8" y="145.2" width="2.8" height="2" fill="#555b66"/><rect x="1686.6" y="145.2" width="2.8" height="2" fill="#555b66"/><rect x="1679" y="148.3" width="2.8" height="2" fill="#555b66"/><rect x="1682.8" y="148.3" width="2.8" height="2" fill="#555b66"/><rect x="1686.6" y="148.3" width="2.8" height="2" fill="#555b66"/><rect x="1679" y="151.4" width="2.8" height="2" fill="#555b66"/><rect x="1682.8" y="151.4" width="2.8" height="2" fill="#555b66"/><rect x="1686.6" y="151.4" width="2.8" height="2" fill="#555b66"/><rect x="1721.5" y="77" width="18" height="23" rx="1" fill="#d8a868"/><rect x="1726.5" y="74.5" width="8.5" height="4" rx="1" fill="#e8e8e8"/><rect x="1729" y="72.8" width="3.5" height="3" rx="1" fill="#e8e8e8"/><path d="M1730 84.5h17l7.5 7.5v21.3h-24.5z" fill="#e4e4e4" /><path d="M1747 84.5v7.5h7.5z" fill="#fafafa" /><path d="M1774.5 74.5h12l3 3v14h-15z" fill="#cfcfcf" /><path d="M1777 80h7M1777 83.3h9M1777 86.6h5" stroke="#7a7a7a" stroke-width="0.9" fill="none" /><path d="M1783.5 80.5l8.5 9M1792 80.5l-8.5 9" stroke="#f4f4f4" stroke-width="1.3" fill="none" /><circle cx="1783.5" cy="91.5" r="2" fill="none" stroke="#f4f4f4" stroke-width="1.1"/><circle cx="1791.5" cy="91.5" r="2" fill="none" stroke="#f4f4f4" stroke-width="1.1"/><path d="M1776.5 105.5h8l3 3v12.5h-11z" fill="#b4b4b4" /><path d="M1780.5 109.5h8l3.5 3.5v12h-11.5z" fill="#e4e4e4" /><path d="M1788.5 109.5v3.5h3.5z" fill="#fafafa" /><path d="M1837 76.7h17.5v13h22.4v17h-39.9z" fill="#e0e0e0" /></svg></div>
<div id="doctabs"><div style="position:absolute;left:2px;top:221px;width:1912px;height:5px;background:#3b4453;"></div><svg style="position:absolute;left:0px;top:190px;" width="1917" height="32" viewBox="0 190 1917 32"><path d="M72.8 221L85.3 191H216L204 221z" fill="#3b4453"/><path d="M23 196L14 216M264 196L256 216" stroke="#4a5364" stroke-width="1.2" fill="none"/><path d="M191.3 201.3l9.4 9.4M200.7 201.3l-9.4 9.4" stroke="#aeb1b8" stroke-width="2.4"/><path d="M227 206h16M235 198v16" stroke="#e8e8e8" stroke-width="2.3"/></svg><span class="t" style="left:33.47px;top:195.63px;font-size:15.5px;line-height:22px;transform:scaleX(0.9322);color:#f2f2f2;">Start</span><span class="t" style="left:93.71px;top:195.63px;font-size:15.5px;line-height:22px;transform:scaleX(0.9334);color:#ffffff;font-weight:bold;">interseçoes*</span><div style="position:absolute;left:2px;top:941px;width:1912px;height:5px;background:#3b4453;"></div><svg style="position:absolute;left:0px;top:946px;" width="1917" height="32" viewBox="0 946 1917 32"><path d="M12.2 976L23.8 946H98.3L86 976z" fill="#3b4453"/><path d="M142 951L134 971M192 951L184 971" stroke="#4a5364" stroke-width="1.2" fill="none"/><path d="M155 961h16M163 953v16" stroke="#f0f0f0" stroke-width="2.3"/></svg><span class="t" style="left:33.44px;top:950.63px;font-size:15.5px;line-height:22px;transform:scaleX(0.9901);color:#ffffff;font-weight:bold;">Model</span><span class="t" style="left:107.69px;top:950.63px;font-size:15.5px;line-height:22px;transform:scaleX(0.8696);color:#f2f2f2;">a3</span></div>
<div id="drawing"><div class="viewport" style="position:absolute;left:0px;top:226px;width:1917px;height:715px;background:#212830;"></div><svg style="position:absolute;left:0px;top:226px;overflow:hidden;" width="1917" height="715" viewBox="0 226 1917 715"><path d="M58 226L1328 940.5" stroke="#ffff00" stroke-width="1" fill="none" shape-rendering="crispEdges"/><g stroke="#ffffff" stroke-width="1" fill="none" shape-rendering="crispEdges"><ellipse cx="924.4" cy="354.3" rx="88.1" ry="49.9"/><ellipse cx="924.4" cy="643.2" rx="88.1" ry="49.4"/><path d="M862.2 319.1L986.5 677.4M986.2 319.1L862.2 677.4M863.2 390.2L985.4 606M986.7 390.2L862 606"/></g><ellipse cx="924.6" cy="570.7" rx="44.2" ry="25" stroke="#e0141e" stroke-width="1" fill="none" shape-rendering="crispEdges"/><path d="M841.2 627.7Q985.9 398.3 952.9 689.9" stroke="#ffff00" stroke-width="1" fill="none" shape-rendering="crispEdges"/><path d="M841.7 627.9L952.6 689.3" stroke="#ffff00" stroke-width="1" fill="none" shape-rendering="crispEdges"/><defs><linearGradient id="gx" gradientUnits="userSpaceOnUse" x1="869.9" y1="649.2" x2="875.3" y2="650.8"><stop offset="0" stop-color="#a34646"/><stop offset=".45" stop-color="#d97474"/><stop offset="1" stop-color="#9c4040"/></linearGradient><linearGradient id="gy" gradientUnits="userSpaceOnUse" x1="842.4" y1="665.3" x2="840" y2="670"><stop offset="0" stop-color="#3f8a3f"/><stop offset=".45" stop-color="#92dc7c"/><stop offset="1" stop-color="#4a9a4a"/></linearGradient><linearGradient id="gz" gradientUnits="userSpaceOnUse" x1="0" y1="675.8" x2="0" y2="681.3"><stop offset="0" stop-color="#5d86cc"/><stop offset=".4" stop-color="#4a72b8"/><stop offset="1" stop-color="#2c4e90"/></linearGradient></defs><path d="M821.5 655.5L860 675.5" stroke="url(#gy)" stroke-width="5.8" stroke-linecap="round"/><path d="M825 678.6H863.5" stroke="url(#gz)" stroke-width="6.2" stroke-linecap="round"/><path d="M864.3 676.5L880.8 624" stroke="url(#gx)" stroke-width="6" stroke-linecap="round"/><path d="M1500.5 601.8L1468.4 698.7" stroke="#ff8080" stroke-width="1" shape-rendering="crispEdges"/><path d="M1428.2 639.4L1503.8 680.5" stroke="#80ff80" stroke-width="1" shape-rendering="crispEdges"/><path d="M1434 666.5H1501" stroke="#8080ff" stroke-width="1" shape-rendering="crispEdges"/><rect x="1475.5" y="663.5" width="6" height="6" fill="#212830" stroke="#fff" stroke-width="1" shape-rendering="crispEdges"/><rect x="1840" y="244" width="13" height="3" fill="#f0f0f0"/><path d="M1868.3 237.2h8.7v8.8" stroke="#e4e4e4" stroke-width="2.3" fill="none"/><rect x="1866.3" y="240.5" width="7.7" height="7.2" fill="none" stroke="#f4f4f4" stroke-width="2.7"/><path d="M1891 237.8l10.5 9.4M1901.5 237.8l-10.5 9.4" stroke="#f2f2f2" stroke-width="3.1"/><defs><radialGradient id="glow"><stop offset="0" stop-color="#3a424e" stop-opacity=".9"/><stop offset="1" stop-color="#212830" stop-opacity="0"/></radialGradient><linearGradient id="ft" x1="0" y1="0" x2="1" y2="0"><stop offset="0" stop-color="#b8bbbf"/><stop offset="1" stop-color="#a4a6aa"/></linearGradient></defs><path fill-rule="evenodd" fill="#454b57" d="M1768.6 363.2a63.3 40.8 0 1 0 126.6 0a63.3 40.8 0 1 0 -126.6 0zM1782 360.5a50 29 0 1 0 100 0a50 29 0 1 0 -100 0z"/><text transform="translate(1790.5 334) rotate(60) scale(1.05 1)" text-anchor="middle" dominant-baseline="central" font-family="Liberation Sans, sans-serif" font-weight="bold" font-size="15" fill="#8d919a">W</text><text transform="translate(1872 336) rotate(-56) scale(1.05 1)" text-anchor="middle" dominant-baseline="central" font-family="Liberation Sans, sans-serif" font-weight="bold" font-size="15" fill="#8d919a">N</text><text transform="translate(1785.5 387.5) rotate(-30) scale(1.15 1)" text-anchor="middle" dominant-baseline="central" font-family="Liberation Sans, sans-serif" font-weight="bold" font-size="17.5" fill="#b4b7be">S</text><text transform="translate(1878 387) rotate(32) scale(1.15 1)" text-anchor="middle" dominant-baseline="central" font-family="Liberation Sans, sans-serif" font-weight="bold" font-size="17.5" fill="#b4b7be">E</text><ellipse cx="1833" cy="340" rx="50" ry="42" fill="url(#glow)"/><path d="M1806.1 303L1835.2 305.8L1871.9 323.6L1842.7 322z" fill="#9b9ea4"/><path d="M1806.1 303L1842.7 322L1826.1 369.1L1792.3 348.3z" fill="#abaeb3"/><path d="M1842.7 322L1871.9 323.6L1856.9 366.6L1826.1 369.1z" fill="url(#ft)"/><path d="M1831.5 327.5l13.5 4.5-9.5 29-13.5-4.5z" fill="#9fa3ae" opacity=".85"/><path d="M1806.1 303L1842.7 322L1826.1 369.1M1842.7 322L1871.9 323.6" stroke="#6d717a" stroke-width=".7" fill="none" stroke-dasharray="4 1.5"/><rect x="1790.8" y="424.5" width="81" height="20.3" rx="4.5" fill="#8b8f9d" stroke="#9a9eac" stroke-width=".8"/><path d="M1857.5 431.5h8.5l-4.25 5z" fill="none" stroke="#a4a8b6" stroke-width="1"/><rect x="1871" y="476" width="40" height="259.5" rx="4" fill="#5b5f65"/><g stroke="#4b4e57" fill="#545860" stroke-width="1.6" stroke-linejoin="round"><path d="M1890.8 497h9.5a4 4 0 0 1 4 4v9.5a13.5 13.5 0 1 1-13.5-13.5z"/><circle cx="1890.8" cy="510.5" r="7" fill="#5b5f65"/><path d="M1885.8 515.5l-4.5 4.5M1895.8 515.5l4.5 4.5" fill="none"/><path d="M1886.5 577.5c-2.5-2-6-7.5-9.5-11.5 1.5-2 4-1.5 7 1.5l-1.5-12.5c0-2.5 3-3 3.7-.5l1.8 8-.5-11c0-2.5 3.5-2.5 3.8 0l.7 11 1.5-9.5c.4-2.5 3.6-2 3.5.5l-.8 10.5 2.5-6c1-2.3 4-1.3 3.3 1l-3.5 12c-.5 3-1.5 5-3 6.5z"/><path d="M1877 585l17 17.5M1894.5 585l-17 18" fill="none" stroke-width="1.8"/><path d="M1876.5 584.6h5l-5 5zM1895.5 584.6h-5l5 5zM1876.5 604.5h5l-5-5z" stroke-width=".8" fill="#4b4e57"/><path d="M1900 607l5.5 4.5" stroke-width="3.2" stroke-linecap="round" fill="none"/><circle cx="1896" cy="602.8" r="5.6" fill="#5b5f65"/><ellipse cx="1890.1" cy="647.3" rx="13.5" ry="4.8" fill="none"/><path d="M1888 657.5v-20.5h-3l5.1-5.5 5.1 5.5h-3v20.5z"/><path d="M1880 651.5l5-3.5v7z" stroke-width=".8" fill="#4b4e57"/><rect x="1877" y="683.8" width="6.8" height="6.8" rx="1"/><rect x="1886.8" y="683.8" width="6.8" height="6.8" rx="1"/><rect x="1896.6" y="683.8" width="6.8" height="6.8" rx="1"/><rect x="1877" y="695" width="19.5" height="16" rx="1"/><path d="M1883 698v10l8.5-5z" stroke-width=".8" fill="#4b4e57"/></g><path d="M1874 544.5h34M1874 678.5h34" stroke="#63676d" stroke-width="1"/><circle cx="1903.8" cy="482.3" r="4.3" fill="#63676e" stroke="#51555d" stroke-width=".8"/><path d="M1901.8 480.3l4 4M1905.8 480.3l-4 4" stroke="#6f737a" stroke-width="1.2"/><circle cx="1903.8" cy="727.6" r="4.3" fill="#63676e" stroke="#51555d" stroke-width=".8"/><path d="M1901.3 726h5M1901.8 728h4l-2 2.2z" stroke="#51555d" stroke-width="1" fill="#51555d"/><path d="M1888.25 534.7h6.5l-3.25 3.6z" fill="#4b4e57"/><path d="M1888.25 621.3000000000001h6.5l-3.25 3.6z" fill="#4b4e57"/><path d="M1888.25 668.5h6.5l-3.25 3.6z" fill="#4b4e57"/></svg><span class="t" style="left:879.72px;top:598.07px;font-size:20px;line-height:28px;transform:scaleX(1.1556);color:#d23a3a;font-family:'DejaVu Sans',sans-serif;font-weight:200;will-change:transform;">X</span><span class="t" style="left:815.55px;top:629.72px;font-size:21px;line-height:29px;transform:scaleX(1.1429);color:#2fb02f;font-family:'DejaVu Sans',sans-serif;font-weight:200;will-change:transform;">Y</span><span class="t" style="left:820.7px;top:651.72px;font-size:21px;line-height:29px;transform:scaleX(1.2121);color:#2a8cf0;font-family:'DejaVu Sans',sans-serif;font-weight:200;will-change:transform;">Z</span><span class="t" style="left:5.46px;top:229.63px;font-size:15.5px;line-height:22px;transform:scaleX(1.2581);color:#eeeeee;will-change:transform;">[−]</span><span class="t" style="left:27.86px;top:229.63px;font-size:15.5px;line-height:22px;transform:scaleX(0.8783);color:#eeeeee;will-change:transform;">[OLE1]</span><span class="t" style="left:71.17px;top:229.63px;font-size:15.5px;line-height:22px;transform:scaleX(0.9642);color:#eeeeee;will-change:transform;">[Wireframe]</span><span class="t" style="left:1795.15px;top:424.22px;font-size:13.8px;line-height:19px;transform:scaleX(0.9144);color:#6a6e7c;-webkit-text-stroke:.3px #6a6e7c;will-change:transform;">Unnamed</span><span class="t" style="left:1816.5px;top:335px;font-size:9.5px;line-height:9.5px;color:#666a74;font-weight:bold;-webkit-text-stroke:.45px #666a74;transform-origin:50% 50%;transform:translate(-50%,-50%) rotate(-68deg) skewX(-14deg) scale(1,1);">TOP</span><span class="t" style="left:1849.5px;top:344.5px;font-size:9px;line-height:9px;color:#666a74;font-weight:bold;-webkit-text-stroke:.45px #666a74;transform-origin:50% 50%;transform:translate(-50%,-50%) rotate(-72deg) skewX(6deg) scale(0.95,1);">FRONT</span></div>
<div id="cmdline"><div class="cmd-grip" style="position:absolute;left:408px;top:808px;width:32px;height:133px;background:#272e3a;border-radius:3px 0 0 3px;"></div><div class="cmd-history" style="position:absolute;left:439px;top:809px;width:1067px;height:105px;background:rgba(201,201,201,.705);border-radius:0 2px 0 0;"></div><div style="position:absolute;left:439px;top:914px;width:1067px;height:1px;background:#23262c;"></div><div class="cmd-input" style="position:absolute;left:439px;top:915px;width:1067px;height:25px;background:rgba(202,203,204,.93);border-radius:0 0 2px 0;"></div><span class="t" style="left:441.85px;top:817.5px;font-size:15px;line-height:21px;color:#0c0d0f;font-family:'Liberation Mono',monospace;will-change:transform;">Command: SECTION</span><span class="t" style="left:442.04px;top:836.5px;font-size:15px;line-height:21px;color:#0c0d0f;font-family:'Liberation Mono',monospace;will-change:transform;">Select objects: 1 found</span><span class="t" style="left:442.04px;top:855.5px;font-size:15px;line-height:21px;color:#0c0d0f;font-family:'Liberation Mono',monospace;will-change:transform;">Select objects:</span><span class="t" style="left:442.04px;top:874.5px;font-size:15px;line-height:21px;color:#0c0d0f;font-family:'Liberation Mono',monospace;will-change:transform;">Specify first point on Section plane by [Object/Zaxis/View/XY/YZ/ZX/3points] &lt;3points&gt;: XY</span><span class="t" style="left:442.04px;top:893.5px;font-size:15px;line-height:21px;color:#0c0d0f;font-family:'Liberation Mono',monospace;will-change:transform;">Specify a point on the XY-plane &lt;0,0,0&gt;: 0,0,-0.5</span><span class="t" style="left:484px;top:917px;font-size:15px;line-height:21px;color:#6f7276;font-style:italic;font-family:'Liberation Mono',monospace;will-change:transform;">Type a command</span><svg style="position:absolute;left:400px;top:800px;" width="1120" height="145" viewBox="400 800 1120 145"><rect x="413.3" y="814.6" width="1.8" height="1.8" fill="#e0e0e0"/><rect x="416.4" y="814.6" width="1.8" height="1.8" fill="#e0e0e0"/><rect x="419.5" y="814.6" width="1.8" height="1.8" fill="#e0e0e0"/><rect x="422.6" y="814.6" width="1.8" height="1.8" fill="#e0e0e0"/><rect x="425.7" y="814.6" width="1.8" height="1.8" fill="#e0e0e0"/><rect x="428.8" y="814.6" width="1.8" height="1.8" fill="#e0e0e0"/><rect x="431.9" y="814.6" width="1.8" height="1.8" fill="#e0e0e0"/><rect x="413.3" y="817.6" width="1.8" height="1.8" fill="#e0e0e0"/><rect x="416.4" y="817.6" width="1.8" height="1.8" fill="#e0e0e0"/><rect x="419.5" y="817.6" width="1.8" height="1.8" fill="#e0e0e0"/><rect x="422.6" y="817.6" width="1.8" height="1.8" fill="#e0e0e0"/><rect x="425.7" y="817.6" width="1.8" height="1.8" fill="#e0e0e0"/><rect x="428.8" y="817.6" width="1.8" height="1.8" fill="#e0e0e0"/><rect x="431.9" y="817.6" width="1.8" height="1.8" fill="#e0e0e0"/><path d="M416 830.5l10 10M426 830.5l-10 10" stroke="#e4e4e4" stroke-width="2"/><path d="M414 873.5l9.5-9.5" stroke="#dcdcdc" stroke-width="2.6" stroke-linecap="round"/><path d="M428.5 857.5a4.6 4.6 0 1 0 2.5 5.5l-3.3 1-2-2z" fill="#dcdcdc"/><rect x="444.5" y="919.5" width="19" height="14" fill="#c9cacc" stroke="#6e7074" stroke-width="1"/><rect x="445" y="920" width="18" height="3.2" fill="#6e7074"/><path d="M446.5 926l2.5 2-2.5 2M450.5 931h4" stroke="#6e7074" stroke-width="1" fill="none"/><path d="M467 924.7h8l-4 4.6z" fill="#5a5c60"/><path d="M1490.3 929.8h9.4l-4.7-5z" fill="#505255"/></svg></div>
<div id="statusbar"><div style="position:absolute;left:4px;top:983px;width:1225px;height:30px;background:#3b4453;"></div><div style="position:absolute;left:1234px;top:983px;width:59px;height:30px;background:#3b4453;"></div><div style="position:absolute;left:1296px;top:983px;width:80px;height:30px;background:#3b4453;"></div><div style="position:absolute;left:1379px;top:983px;width:130px;height:30px;background:#3b4453;"></div><div style="position:absolute;left:1569px;top:983px;width:21px;height:30px;background:#3b4453;"></div><div style="position:absolute;left:1622px;top:983px;width:103px;height:30px;background:#3b4453;"></div><div style="position:absolute;left:1728px;top:983px;width:50px;height:30px;background:#3b4453;"></div><div style="position:absolute;left:1779px;top:983px;width:30px;height:30px;background:#3b4453;"></div><div style="position:absolute;left:1812px;top:983px;width:30px;height:30px;background:#3b4453;"></div><div style="position:absolute;left:1845px;top:983px;width:4px;height:30px;background:#3b4453;"></div><div style="position:absolute;left:1852px;top:983px;width:60px;height:30px;background:#3b4453;"></div><div style="position:absolute;left:1511px;top:983px;width:28px;height:30px;background:#3b4453;"></div><div style="position:absolute;left:1511px;top:984px;width:28px;height:28px;background:#6394c7;"></div><div style="position:absolute;left:1541px;top:983px;width:28px;height:30px;background:#3b4453;"></div><div style="position:absolute;left:1541px;top:984px;width:28px;height:28px;background:#6394c7;"></div><div style="position:absolute;left:1594px;top:983px;width:28px;height:30px;background:#3b4453;"></div><div style="position:absolute;left:1594px;top:984px;width:28px;height:28px;background:#6394c7;"></div><div style="position:absolute;left:0px;top:1019px;width:1917px;height:1px;background:#0696d7;"></div><div style="position:absolute;left:0px;top:1020px;width:1917px;height:1px;background:#3a3d42;"></div><span class="t" style="left:1238.13px;top:987.63px;font-size:15.5px;line-height:22px;transform:scaleX(0.9255);color:#f4f4f4;">MODEL</span><span class="t" style="left:1689.45px;top:987.63px;font-size:15.5px;line-height:22px;transform:scaleX(0.7322);color:#f4f4f4;">1:1</span><svg style="position:absolute;left:0px;top:980px;" width="1917" height="41" viewBox="0 980 1917 41"><path d="M1301.5 992.5h18M1301.5 997.5h18M1301.5 1002.5h18M1305.5 988.5v18M1310.5 988.5v18M1315.5 988.5v18" stroke="#e6e6e6" stroke-width="1.1" fill="none"/><rect x="1333.1" y="990.1" width="2.8" height="2.8" fill="#e6e6e6"/><rect x="1339.1" y="990.1" width="2.8" height="2.8" fill="#e6e6e6"/><rect x="1345.1" y="990.1" width="2.8" height="2.8" fill="#e6e6e6"/><rect x="1333.1" y="996.1" width="2.8" height="2.8" fill="#e6e6e6"/><rect x="1339.1" y="996.1" width="2.8" height="2.8" fill="#e6e6e6"/><rect x="1345.1" y="996.1" width="2.8" height="2.8" fill="#e6e6e6"/><rect x="1333.1" y="1002.1" width="2.8" height="2.8" fill="#e6e6e6"/><rect x="1339.1" y="1002.1" width="2.8" height="2.8" fill="#e6e6e6"/><rect x="1345.1" y="1002.1" width="2.8" height="2.8" fill="#e6e6e6"/><path d="M1361 994.9h10l-5 5.2z" fill="#e0e0e0"/><path d="M1444 994.9h10l-5 5.2z" fill="#e0e0e0"/><path d="M1493 994.9h10l-5 5.2z" fill="#e0e0e0"/><path d="M1575 994.9h10l-5 5.2z" fill="#e0e0e0"/><path d="M1710 994.9h10l-5 5.2z" fill="#e0e0e0"/><path d="M1763 994.9h10l-5 5.2z" fill="#e0e0e0"/><path d="M1384.5 988v19.5h19.5M1384.5 1002h5.5v5.5" stroke="#e6e6e6" stroke-width="1.2" fill="none"/><circle cx="1422.5" cy="998.5" r="8" fill="none" stroke="#e6e6e6" stroke-width="1.2"/><path d="M1422.5 998.5h11.5M1422.5 998.5l8-9.5" stroke="#e6e6e6" stroke-width="1.2" fill="none"/><path d="M1466.5 989.5l15 15" stroke="#e04a4a" stroke-width="1.2"/><path d="M1474.5 988v18" stroke="#4ad06a" stroke-width="1.2"/><rect x="1472.7" y="995.7" width="3.6" height="3.6" fill="#3b4453" stroke="#f0f0f0" stroke-width=".9"/><path d="M1515.5 1004.5h19.5M1515.5 1004.5l14-14" stroke="#e6e6e6" stroke-width="1.3" fill="none"/><rect x="1521" y="996" width="3.6" height="3.6" fill="#fff"/><rect x="1547.5" y="990.5" width="17" height="17" fill="none" stroke="#fff" stroke-width="1.2"/><rect x="1544.5" y="988.5" width="5" height="5" fill="#6394c7" stroke="#fff" stroke-width="1.1"/><path transform="translate(1606.4 0)" d="M0 988L3.1 996.5 2.3 998 3 999.6 9 1008 1.6 1004.6 0 1003.3 -1.6 1004.6 -9 1008 -3 999.6 -2.3 998 -3.1 996.5z" fill="#ffffff"/><circle cx="1614" cy="992.4" r="3.5" fill="none" stroke="#fff" stroke-width="1.1"/><path transform="translate(1636.5 0)" d="M0 988L3.1 996.5 2.3 998 3 999.6 9 1008 1.6 1004.6 0 1003.3 -1.6 1004.6 -9 1008 -3 999.6 -2.3 998 -3.1 996.5z" fill="#e0e0e0"/><path d="M1645.8 988.3l-5 5.2 2.8.2-2 4.2 5.4-5.6-2.8-.2z" fill="#e0e0e0"/><path transform="translate(1667.5 0)" d="M0 988L3.1 996.5 2.3 998 3 999.6 9 1008 1.6 1004.6 0 1003.3 -1.6 1004.6 -9 1008 -3 999.6 -2.3 998 -3.1 996.5z" fill="#e0e0e0"/><g transform="translate(1743 998)"><rect x="-2" y="-10.2" width="4" height="4.5" transform="rotate(0)" fill="#e6e6e6"/><rect x="-2" y="-10.2" width="4" height="4.5" transform="rotate(45)" fill="#e6e6e6"/><rect x="-2" y="-10.2" width="4" height="4.5" transform="rotate(90)" fill="#e6e6e6"/><rect x="-2" y="-10.2" width="4" height="4.5" transform="rotate(135)" fill="#e6e6e6"/><rect x="-2" y="-10.2" width="4" height="4.5" transform="rotate(180)" fill="#e6e6e6"/><rect x="-2" y="-10.2" width="4" height="4.5" transform="rotate(225)" fill="#e6e6e6"/><rect x="-2" y="-10.2" width="4" height="4.5" transform="rotate(270)" fill="#e6e6e6"/><rect x="-2" y="-10.2" width="4" height="4.5" transform="rotate(315)" fill="#e6e6e6"/><circle r="6.3" fill="none" stroke="#e6e6e6" stroke-width="4"/></g><path d="M1784.5 998h19M1794 988.5v19" stroke="#e6e6e6" stroke-width="2.7"/><rect x="1817.5" y="988.5" width="7" height="7" fill="none" stroke="#e6e6e6" stroke-width="1.1"/><circle cx="1832.5" cy="996.5" r="4.2" fill="none" stroke="#e6e6e6" stroke-width="1.1"/><path d="M1824.5 1000.5l4.5 7h-9z" fill="none" stroke="#e6e6e6" stroke-width="1.1"/><rect x="1857.5" y="990.5" width="19" height="14" fill="none" stroke="#e6e6e6" stroke-width="1.2"/><path d="M1860 1002l4.5-4M1874 993l-4.5 4" stroke="#e6e6e6" stroke-width="1.2"/><path d="M1859.5 998.5v4h4z M1874.5 996.5v-4h-4z" fill="#e6e6e6"/><path d="M1887.5 990h20M1887.5 998h20M1887.5 1006h20" stroke="#e6e6e6" stroke-width="2.2"/></svg></div>
</div></body></html>
